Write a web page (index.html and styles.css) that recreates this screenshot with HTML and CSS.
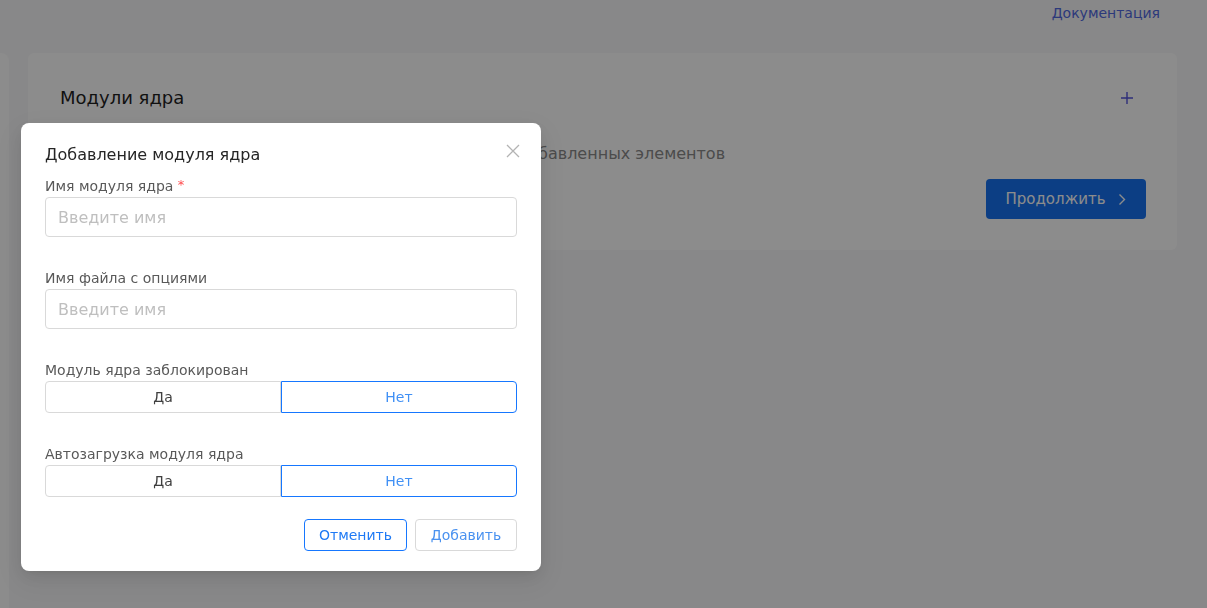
FILE: index.html
```html
<!DOCTYPE html>
<html lang="ru">
<head>
  <meta charset="UTF-8">
  <meta name="viewport" content="width=device-width, initial-scale=1.0">
  <title>Модули ядра</title>
  <link rel="stylesheet" href="styles.css">
</head>
<body>

<header class="topbar">
  <a class="doc-link" href="#">Документация</a>
</header>

<div class="layout">
  <aside class="sidebar"></aside>
  <main class="content">
    <section class="card">
      <div class="card-head">
        <h2>Модули ядра</h2>
        <button class="add-btn" aria-label="Добавить">
          <svg width="12" height="12" viewBox="0 0 12 12"><path d="M6 0v12M0 6h12" stroke="currentColor" stroke-width="1.4"/></svg>
        </button>
      </div>
      <p class="empty">Нет добавленных элементов</p>
      <div class="card-actions">
        <button class="primary">Продолжить
          <svg width="8" height="13" viewBox="0 0 8 13"><path d="M1.5 1.5l5 5-5 5" fill="none" stroke="currentColor" stroke-width="1.4"/></svg>
        </button>
      </div>
    </section>
  </main>
</div>

<div class="overlay">
  <div class="modal">
    <button class="close" aria-label="Закрыть">
      <svg width="14" height="14" viewBox="0 0 14 14"><path d="M1 1l12 12M13 1L1 13" stroke="currentColor" stroke-width="1.3"/></svg>
    </button>
    <h3>Добавление модуля ядра</h3>

    <div class="field">
      <label>Имя модуля ядра <span class="req">*</span></label>
      <input type="text" placeholder="Введите имя">
    </div>

    <div class="field">
      <label>Имя файла с опциями</label>
      <input type="text" placeholder="Введите имя">
    </div>

    <div class="field">
      <label>Модуль ядра заблокирован</label>
      <div class="segmented">
        <button>Да</button>
        <button class="active">Нет</button>
      </div>
    </div>

    <div class="field">
      <label>Автозагрузка модуля ядра</label>
      <div class="segmented">
        <button>Да</button>
        <button class="active">Нет</button>
      </div>
    </div>

    <div class="modal-footer">
      <button class="btn outline">Отменить</button>
      <button class="btn">Добавить</button>
    </div>
  </div>
</div>

</body>
</html>
```

FILE: styles.css
```css
body {
  margin: 0;
  font-family: "DejaVu Sans", sans-serif;
  background-color: #f8f8f9;
  color: #262626;
  height: 100vh;
  overflow: hidden;
}

button {
  font-family: inherit;
}

.topbar {
  height: 53px;
  display: flex;
  justify-content: flex-end;
  padding-right: 47px;
  box-sizing: border-box;
}

.doc-link {
  margin-top: 3px;
  font-size: 14px;
  line-height: 20px;
  color: #5068e0;
  text-decoration: none;
}

.layout {
  display: flex;
  gap: 19px;
  height: calc(100vh - 53px);
}

.sidebar {
  width: 9px;
  background: #ffffff;
  border-top-right-radius: 8px;
}

.content {
  width: 1149px;
}

.card {
  background: #ffffff;
  border-radius: 6px;
  padding: 32px 31px 31px 32px;
}

.card-head {
  display: flex;
  align-items: center;
  justify-content: space-between;
  height: 24px;
}

.card-head h2 {
  margin: 0;
  font-size: 18px;
  font-weight: 500;
  color: #1f1f1f;
}

.add-btn {
  border: none;
  background: none;
  padding: 0;
  margin: 2px 13px 0 0;
  color: #5555dd;
  display: flex;
}

.empty {
  margin: 33px 0 0;
  text-align: center;
  font-size: 16px;
  line-height: 24px;
  color: #8a8a8a;
}

.card-actions {
  display: flex;
  justify-content: flex-end;
  margin-top: 13px;
}

.primary {
  width: 160px;
  height: 40px;
  border: none;
  border-radius: 4px;
  background: #1672f0;
  color: #ffffff;
  font-size: 15px;
  display: flex;
  align-items: center;
  justify-content: center;
  gap: 13px;
  padding-left: 6px;
}

.overlay {
  position: fixed;
  inset: 0;
  background: rgba(0, 0, 0, 0.45);
}

.modal {
  position: absolute;
  left: 21px;
  top: 123px;
  width: 520px;
  box-sizing: border-box;
  padding: 20px 24px 20px;
  background: #ffffff;
  border-radius: 8px;
  box-shadow: 0 6px 16px rgba(0, 0, 0, 0.08), 0 3px 6px -4px rgba(0, 0, 0, 0.12), 0 9px 28px 8px rgba(0, 0, 0, 0.05);
}

.modal h3 {
  margin: 0 0 8px;
  font-size: 16px;
  line-height: 24px;
  font-weight: 500;
  color: #262626;
}

.close {
  position: absolute;
  top: 21px;
  right: 21px;
  border: none;
  background: none;
  padding: 0;
  color: #b3b3b3;
  display: flex;
}

.field {
  margin-bottom: 30px;
}

.field:nth-of-type(4) {
  margin-bottom: 22px;
}

.field label {
  display: block;
  font-size: 14px;
  line-height: 22px;
  height: 22px;
  color: #595959;
}

.req {
  color: #ff4d4f;
  font-size: 13px;
  line-height: 1;
  vertical-align: 2px;
}

.field input {
  display: block;
  width: 100%;
  height: 40px;
  box-sizing: border-box;
  border: 1px solid #d9d9d9;
  border-radius: 4px;
  padding: 0 12px;
  font-family: inherit;
  font-size: 16px;
  color: #262626;
}

.field input::placeholder {
  color: #bfbfbf;
}

.segmented {
  display: flex;
  height: 32px;
}

.segmented button {
  flex: 1;
  border: 1px solid #d9d9d9;
  background: #ffffff;
  font-size: 14px;
  color: #404040;
  border-radius: 4px 0 0 4px;
}

.segmented button.active {
  border-color: #1677ff;
  color: #4090f5;
  border-radius: 0 4px 4px 0;
}

.modal-footer {
  display: flex;
  justify-content: flex-end;
  gap: 8px;
}

.btn {
  width: 102px;
  height: 32px;
  padding: 0;
  border: 1px solid #d9d9d9;
  border-radius: 4px;
  background: #ffffff;
  font-size: 14px;
  color: #4a92f0;
}

.btn.outline {
  width: 103px;
  border-color: #1677ff;
  color: #1f7af5;
}
```
